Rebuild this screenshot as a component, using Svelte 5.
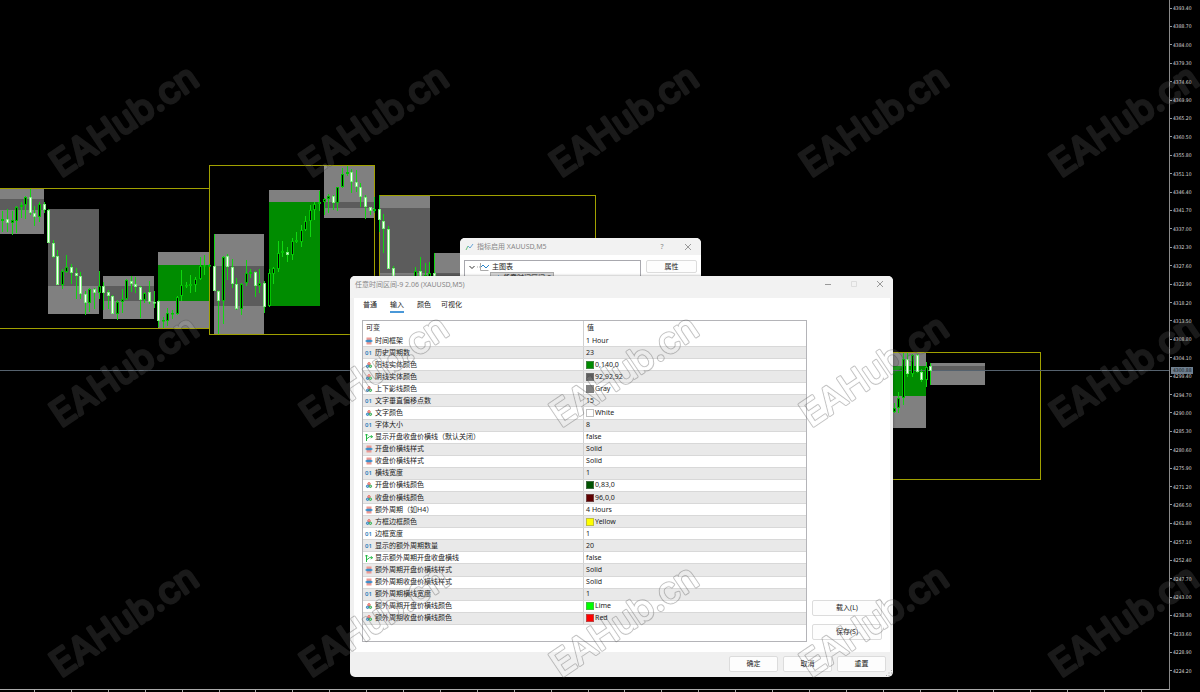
<script>
	const prices = Array.from({ length: 37 }, (_, i) => (4393.4 - i * 4.7).toFixed(2));
	const ticks = Array.from({ length: 60 }, (_, i) => Math.round(34 + i * 36.9));

	// period boxes: x, y, width, height, body y, body height, body colour
	const periods = [
		[0, 189, 44, 45, 199, 11, "#5c5c5c"],
		[48, 209, 51, 105, 209, 77, "#5c5c5c"],
		[103, 276, 51, 43, 286, 15, "#5c5c5c"],
		[158, 252, 51, 76, 265, 36, "#008c00"],
		[214, 234, 50, 100, 266, 40, "#5c5c5c"],
		[269, 190, 51, 116, 202, 104, "#008c00"],
		[324, 165, 51, 53, 202, 6, "#5c5c5c"],
		[379, 195, 51, 120, 208, 65, "#5c5c5c"],
		[434, 253, 51, 60, 273, 40, "#5c5c5c"],
		[875, 352, 51, 76, 366, 30, "#008c00"],
		[930, 363, 55, 22, 366, 4, "#5c5c5c"],
	];

	// four-hour frames: x, y, width, height
	const frames = [
		[-10, 188, 219, 140],
		[209, 165, 165, 169],
		[379, 195, 216, 120],
		[820, 352, 220, 127],
	];

	// centre, high, low, body top, body bottom, falling
	const candles = [
		[2, 211, 232, 219, 221, 0],
		[7, 209, 232, 219, 223, 1],
		[12, 211, 235, 220, 223, 0],
		[16, 206, 233, 207, 221, 0],
		[21, 202, 218, 205, 207, 0],
		[25, 196, 219, 197, 205, 0],
		[30, 189, 215, 197, 213, 1],
		[34, 206, 226, 213, 217, 1],
		[39, 202, 222, 204, 217, 0],
		[44, 202, 213, 204, 210, 1],
		[48, 209, 243, 210, 243, 1],
		[53, 240, 258, 243, 257, 1],
		[57, 250, 285, 256, 285, 1],
		[62, 269, 289, 271, 285, 0],
		[66, 255, 273, 267, 272, 0],
		[71, 264, 284, 267, 273, 1],
		[76, 268, 299, 273, 276, 1],
		[80, 272, 299, 276, 294, 1],
		[85, 291, 315, 294, 303, 1],
		[89, 288, 312, 289, 303, 0],
		[94, 288, 309, 289, 293, 1],
		[99, 271, 299, 286, 293, 0],
		[103, 282, 310, 286, 293, 1],
		[108, 290, 309, 292, 296, 1],
		[112, 295, 314, 296, 314, 1],
		[117, 300, 320, 302, 314, 0],
		[122, 289, 313, 299, 302, 0],
		[126, 279, 300, 280, 299, 0],
		[131, 276, 292, 281, 284, 1],
		[135, 277, 293, 284, 287, 1],
		[140, 286, 318, 287, 300, 1],
		[144, 292, 303, 293, 300, 0],
		[149, 281, 304, 292, 302, 1],
		[154, 291, 308, 302, 303, 1],
		[158, 300, 327, 301, 321, 1],
		[163, 317, 328, 320, 321, 0],
		[167, 308, 326, 313, 321, 0],
		[172, 310, 319, 313, 314, 0],
		[177, 296, 315, 297, 314, 0],
		[181, 270, 301, 285, 296, 0],
		[186, 282, 288, 285, 286, 0],
		[190, 275, 293, 284, 286, 0],
		[195, 277, 292, 279, 285, 0],
		[200, 257, 280, 266, 279, 0],
		[204, 255, 275, 265, 266, 0],
		[209, 264, 267, 265, 266, 0],
		[214, 234, 291, 266, 291, 1],
		[218, 290, 334, 291, 301, 1],
		[223, 256, 324, 257, 301, 0],
		[227, 254, 280, 256, 267, 1],
		[232, 259, 288, 267, 284, 1],
		[236, 278, 310, 284, 309, 1],
		[241, 283, 315, 284, 309, 0],
		[246, 260, 286, 273, 283, 0],
		[250, 269, 278, 272, 274, 0],
		[255, 271, 297, 272, 286, 1],
		[259, 269, 293, 283, 286, 0],
		[264, 281, 313, 283, 307, 1],
		[269, 269, 307, 273, 306, 0],
		[273, 267, 284, 268, 274, 0],
		[278, 241, 272, 253, 269, 0],
		[282, 241, 257, 251, 253, 0],
		[287, 247, 262, 252, 255, 1],
		[292, 238, 260, 241, 255, 0],
		[296, 232, 243, 240, 242, 0],
		[301, 225, 247, 230, 242, 0],
		[305, 216, 231, 221, 230, 0],
		[310, 205, 237, 210, 221, 0],
		[314, 202, 220, 204, 210, 0],
		[319, 191, 211, 202, 204, 0],
		[324, 198, 215, 199, 202, 0],
		[328, 194, 213, 196, 199, 0],
		[333, 195, 210, 196, 203, 1],
		[337, 187, 211, 187, 203, 0],
		[342, 168, 188, 174, 187, 0],
		[347, 166, 176, 172, 174, 0],
		[351, 169, 193, 172, 182, 1],
		[356, 170, 192, 182, 187, 1],
		[360, 183, 207, 187, 197, 1],
		[365, 195, 219, 197, 207, 1],
		[370, 207, 215, 207, 211, 1],
		[374, 197, 213, 209, 211, 0],
		[379, 195, 232, 209, 220, 1],
		[383, 214, 253, 221, 229, 1],
		[388, 226, 269, 229, 269, 1],
		[393, 266, 300, 268, 290, 1],
		[415, 267, 300, 271, 290, 0],
		[420, 257, 300, 271, 290, 1],
		[425, 263, 300, 275, 290, 0],
		[429, 262, 300, 273, 290, 0],
		[434, 253, 300, 273, 290, 1],
		[894, 403, 413, 408, 412, 0],
		[898, 392, 413, 398, 408, 0],
		[903, 353, 405, 359, 398, 0],
		[907, 353, 377, 359, 374, 1],
		[912, 354, 377, 355, 374, 0],
		[917, 354, 373, 355, 372, 1],
		[921, 369, 382, 372, 380, 1],
		[926, 362, 387, 367, 380, 0],
		[930, 363, 385, 366, 371, 1],
	];

	const tabs = ["普通", "输入", "颜色", "可视化"];
	let activeTab = $state("输入");

	const inputs = [
		{ type: "enum", name: "时间框架", value: "1 Hour" },
		{ type: "int", name: "历史周期数", value: "23" },
		{ type: "color", name: "阳线实体颜色", value: "0,140,0", color: "#008c00" },
		{ type: "color", name: "阴线实体颜色", value: "92,92,92", color: "#5c5c5c" },
		{ type: "color", name: "上下影线颜色", value: "Gray", color: "#808080" },
		{ type: "int", name: "文字垂直偏移点数", value: "15" },
		{ type: "color", name: "文字颜色", value: "White", color: "#ffffff" },
		{ type: "int", name: "字体大小", value: "8" },
		{ type: "bool", name: "显示开盘收盘价横线（默认关闭）", value: "false" },
		{ type: "enum", name: "开盘价横线样式", value: "Solid" },
		{ type: "enum", name: "收盘价横线样式", value: "Solid" },
		{ type: "int", name: "横线宽度", value: "1" },
		{ type: "color", name: "开盘价横线颜色", value: "0,83,0", color: "#005300" },
		{ type: "color", name: "收盘价横线颜色", value: "96,0,0", color: "#600000" },
		{ type: "enum", name: "额外周期（如H4）", value: "4 Hours" },
		{ type: "color", name: "方框边框颜色", value: "Yellow", color: "#ffff00" },
		{ type: "int", name: "边框宽度", value: "1" },
		{ type: "int", name: "显示的额外周期数量", value: "20" },
		{ type: "bool", name: "显示额外周期开盘收盘横线", value: "false" },
		{ type: "enum", name: "额外周期开盘价横线样式", value: "Solid" },
		{ type: "enum", name: "额外周期收盘价横线样式", value: "Solid" },
		{ type: "int", name: "额外周期横线宽度", value: "1" },
		{ type: "color", name: "额外周期开盘价横线颜色", value: "Lime", color: "#00ff00" },
		{ type: "color", name: "额外周期收盘价横线颜色", value: "Red", color: "#ff0000" },
	];

	const marks = [0, 1, 2].flatMap((row) => [0, 1, 2, 3, 4].map((col) => [61 + col * 250, 178 + row * 250]));
</script>

<main class="terminal">
	<div class="chart">
		<svg class="plot" aria-label="XAUUSD,M5">
			{#each periods as [x, y, w, h, by, bh, color]}
				<rect {x} {y} width={w} height={h} fill="#808080" />
				<rect {x} y={by} width={w} height={bh} fill={color} />
			{/each}
			{#each frames as [x, y, w, h]}
				<rect x={x + 0.5} y={y + 0.5} width={w} height={h} fill="none" stroke="#a0a000" />
			{/each}
			<rect x="0" y="370" width="100%" height="1" fill="#55626e" />
			{#each candles as [x, high, low, top, bottom, falling]}
				<rect {x} y={high} width="1" height={low - high} fill="#10d810" />
				<rect
					x={x - 0.5}
					y={top + 0.5}
					width="2"
					height={Math.max(bottom - top - 1, 0.5)}
					fill={falling ? "#fff" : "#000"}
					stroke={falling ? "#7cf07c" : "#00c400"}
				/>
			{/each}
		</svg>
		<div class="price-axis">
			{#each prices as price}
				<span class="price">{price}</span>
			{/each}
			<span class="current">4300.88</span>
		</div>
		<svg class="time-axis" aria-hidden="true">
			{#each ticks as x}
				<rect {x} y="0" width="1" height="2" fill="#aaa" />
			{/each}
		</svg>
	</div>

	<section class="window list-window">
		<header class="title-bar">
			<svg class="app-icon" viewBox="0 0 9 8">
				<path d="M1 7 L3 3 L5 5" fill="none" stroke="#6abf7a" />
				<path d="M3 3 L5 5 L8 1" fill="none" stroke="#68a5d8" />
			</svg>
			<span class="title">指标启用 XAUUSD,M5</span>
			<button class="caption-button" aria-label="帮助">?</button>
			<button class="caption-button" aria-label="关闭">
				<svg viewBox="0 0 8 8"><path d="M1 1 L7 7 M7 1 L1 7" /></svg>
			</button>
		</header>
		<div class="list-body">
			<div class="tree">
				<div class="tree-row">
					<svg class="chevron" viewBox="0 0 6 6"><path d="M0.5 2 L3 4.5 L5.5 2" /></svg>
					<svg class="tree-icon" viewBox="0 0 12 8">
						<path d="M0 4h3" stroke="#aaa" stroke-dasharray="1 1" />
						<path d="M3.5 0v7.5h8" stroke="#aaa" />
						<path d="M4 4 L6 2 L9 5 L12 2" stroke="#2a84c8" />
					</svg>
					<span>主图表</span>
				</div>
				<div class="tree-child">
					<svg class="app-icon" viewBox="0 0 9 8">
						<path d="M1 6 L3 2 L5 4 L8 1" fill="none" stroke="#68a5d8" />
					</svg>
					<span>任意时间区间-9</span>
				</div>
			</div>
			<button class="button">属性</button>
		</div>
	</section>

	<section class="window settings">
		<header class="title-bar">
			<span class="title">任意时间区间-9 2.06 (XAUUSD,M5)</span>
			<button class="caption-button" aria-label="最小化">
				<svg viewBox="0 0 8 8"><path d="M1 4.5 H7" /></svg>
			</button>
			<button class="caption-button faded" aria-label="最大化" disabled>
				<svg viewBox="0 0 8 8"><path d="M1.5 1.5 H6.5 V6.5 H1.5 Z" /></svg>
			</button>
			<button class="caption-button" aria-label="关闭">
				<svg viewBox="0 0 8 8"><path d="M1 1 L7 7 M7 1 L1 7" /></svg>
			</button>
		</header>
		<div class="settings-body">
			<nav class="tabs">
				{#each tabs as tab}
					<button class="tab" class:active={tab === activeTab} onclick={() => (activeTab = tab)}>{tab}</button>
				{/each}
			</nav>
			<div class="panel">
				<div class="grid-box">
					<table>
						<thead>
							<tr><th>可变</th><th>值</th></tr>
						</thead>
						<tbody>
							{#each inputs as input}
								<tr>
									<td>
										<div class="cell">
											{#if input.type === "int"}
												<span class="int">01</span>
											{:else if input.type === "enum"}
												<svg class="icon" viewBox="0 0 8 8">
													<rect x="1.5" y="0.5" width="5" height="2.5" fill="#ee9a94" />
													<rect x="1.5" y="5" width="5" height="2.5" fill="#ee9a94" />
													<path d="M2 2.7h4l2 1.3-2 1.3H2L0 4z" fill="#3e8fc8" />
												</svg>
											{:else if input.type === "color"}
												<svg class="icon" viewBox="0 0 8 8">
													<circle cx="4" cy="2.8" r="1.2" fill="#f6c4c0" stroke="#e2574c" stroke-width="0.9" />
													<circle cx="2.6" cy="5.3" r="1.2" fill="#8fc0e8" stroke="#2a7ab8" stroke-width="0.9" />
													<circle cx="5.4" cy="5.3" r="1.2" fill="#a8dfb4" stroke="#26a544" stroke-width="0.9" />
												</svg>
											{:else}
												<svg class="icon" viewBox="0 0 8 8">
													<path d="M1.5 8V1M0 2.5L1.5 1L3 2.5M1.5 6L4.5 3.7H7.5M6 2.2L7.5 3.7L6 5.2" fill="none" stroke="#25b845" />
												</svg>
											{/if}
											<span>{input.name}</span>
										</div>
									</td>
									<td>
										<div class="cell value">
											{#if input.color}
												<span class="swatch" style="background: {input.color}"></span>
											{/if}
											<span>{input.value}</span>
										</div>
									</td>
								</tr>
							{/each}
						</tbody>
					</table>
				</div>
				<div class="side">
					<button class="button">载入(L)</button>
					<button class="button">保存(S)</button>
				</div>
			</div>
		</div>
		<footer class="actions">
			<button class="button">确定</button>
			<button class="button">取消</button>
			<button class="button">重置</button>
		</footer>
		<svg class="grip" viewBox="0 0 8 8" aria-hidden="true">
			<path d="M6 1h1v1h-1zM6 3.5h1v1h-1zM3.5 3.5h1v1h-1zM6 6h1v1h-1zM3.5 6h1v1h-1zM1 6h1v1h-1z" />
		</svg>
	</section>

	<svg class="watermark" aria-hidden="true">
		<defs>
			<mask id="outline" maskUnits="userSpaceOnUse" x="-10" y="-50" width="200" height="80">
				<rect x="-10" y="-50" width="200" height="80" fill="#fff" />
				<text class="mark" fill="#000" stroke="#000" stroke-width="1">EAHub.cn</text>
			</mask>
		</defs>
		{#each marks as [x, y]}
			<g transform="translate({x} {y}) rotate(-34)">
				<g opacity="0.1">
					<text class="mark" fill="#fff" stroke="#fff" stroke-width="3">EAHub.cn</text>
				</g>
				<g opacity="0.26" mask="url(#outline)">
					<text class="mark" fill="#1a1a1a" stroke="#1a1a1a" stroke-width="3">EAHub.cn</text>
				</g>
			</g>
		{/each}
	</svg>
</main>

<style>
	:global(body) {
		margin: 0;
		background: #000;
	}
	.terminal {
		position: relative;
		min-height: 100vh;
		display: flex;
		overflow: hidden;
		font: 7px/10px "Noto Sans", "Noto Sans CJK SC", sans-serif;
		color: #222;
	}
	.chart {
		flex: 1;
		display: grid;
		grid-template-columns: 1fr 30px;
		grid-template-rows: 1fr 2px;
	}
	.plot {
		width: 100%;
		height: 100%;
		border-right: 1px solid #8a8a8a;
		border-bottom: 1px solid #aaa;
		box-sizing: border-box;
	}
	.price-axis {
		position: relative;
		grid-row: span 2;
		display: flex;
		flex-direction: column;
		justify-content: space-between;
		padding: 3px 0 16px;
		color: #d8d8d8;
		font: 5px/10px "DejaVu Sans Condensed", "DejaVu Sans", sans-serif;
	}
	.price {
		display: flex;
		align-items: center;
		gap: 1px;
	}
	.price::before {
		content: "";
		width: 2px;
		height: 1px;
		background: #999;
	}
	.current {
		position: absolute;
		top: 367px;
		left: 1px;
		width: 22px;
		padding-left: 2px;
		box-sizing: border-box;
		line-height: 7px;
		background: #708090;
		color: #101820;
	}
	.time-axis {
		width: 100%;
		height: 2px;
	}
	button {
		font: inherit;
		color: inherit;
		padding: 0;
		border: 0;
		background: none;
	}
	.window {
		position: absolute;
		display: flex;
		flex-direction: column;
		border-radius: 5px;
		background: #f0f0f0;
		overflow: hidden;
	}
	.title-bar {
		display: flex;
		align-items: center;
		height: 17px;
		padding: 0 5px;
		background: #f2f2f2;
		color: #888;
	}
	.title {
		flex: 1;
	}
	.app-icon {
		width: 9px;
		height: 8px;
		margin-right: 3px;
	}
	.caption-button {
		width: 26px;
		height: 16px;
		display: flex;
		align-items: center;
		justify-content: center;
	}
	.caption-button svg {
		width: 8px;
		height: 8px;
		fill: none;
		stroke: #999;
	}
	.caption-button.faded svg {
		stroke: #ddd;
	}
	.button {
		height: 16px;
		width: 49px;
		background: #fdfdfd;
		border: 1px solid #dcdcdc;
		border-radius: 2px;
		line-height: 12px;
	}
	.list-window {
		left: 460px;
		top: 238px;
		width: 241px;
		height: 100px;
	}
	.list-window .title-bar {
		padding-right: 0;
	}
	.list-body {
		flex: 1;
		display: flex;
		gap: 5px;
		padding: 5px 4px;
		background: #fff;
	}
	.list-body .button {
		width: 51px;
		height: 13px;
		line-height: 10px;
	}
	.tree {
		flex: 1;
		border: 1px solid #a8a8ae;
	}
	.tree-row {
		display: flex;
		align-items: center;
		height: 11px;
		padding-left: 4px;
	}
	.chevron {
		width: 6px;
		height: 6px;
		margin-right: 2px;
		fill: none;
		stroke: #333;
	}
	.tree-icon {
		width: 12px;
		height: 8px;
		margin-right: 3px;
		fill: none;
	}
	.tree-child {
		display: flex;
		align-items: center;
		width: 62px;
		margin-left: 25px;
		background: #d4d4d4;
		border: 1px solid #aaa;
	}
	.settings {
		left: 350px;
		top: 276px;
		width: 543px;
		box-shadow: 0 0 3px rgba(0, 0, 0, 0.4);
	}
	.settings .title-bar {
		height: 22px;
		align-items: flex-start;
		padding-right: 0;
	}
	.settings .title {
		line-height: 18px;
	}
	.settings-body {
		margin: 0 3px 0 4px;
		padding: 0 5px 10px 8px;
		background: #fff;
	}
	.tabs {
		display: flex;
		gap: 13px;
		height: 22px;
		padding-left: 1px;
	}
	.tab {
		height: 15px;
		line-height: 13px;
		border-bottom: 2px solid transparent;
	}
	.tab.active {
		border-bottom-color: #4a98d8;
	}
	.tab:nth-child(4) {
		margin-left: -3px;
	}
	.panel {
		display: flex;
		gap: 5px;
	}
	.grid-box {
		flex: 1;
		height: 320px;
		border: 1px solid #b4b4b8;
	}
	table {
		width: 100%;
		height: 304px;
		border-collapse: collapse;
		table-layout: fixed;
	}
	th,
	td {
		padding: 0 0 0 3px;
		text-align: left;
		font-weight: normal;
		border-bottom: 1px solid #d8d8d8;
	}
	th {
		height: 14px;
		border-bottom: 0;
	}
	th:first-child,
	td:first-child {
		border-right: 1px solid #d0d0d0;
	}
	th:first-child {
		width: 49%;
	}
	td {
		height: 11px;
	}
	td:first-child,
	td:last-child {
		padding-left: 2px;
	}
	tbody tr:nth-child(even) {
		background: #e9e9e9;
	}
	.cell {
		display: flex;
		align-items: center;
		gap: 2px;
		height: 11px;
		white-space: nowrap;
	}
	.value {
		gap: 1px;
	}
	.icon,
	.int {
		width: 8px;
		height: 8px;
	}
	.int {
		font-size: 6px;
		font-weight: 600;
		line-height: 8px;
		color: #2a7ab8;
	}
	.swatch {
		width: 8px;
		height: 8px;
		box-sizing: border-box;
		border: 1px solid rgba(128, 128, 128, 0.5);
	}
	.side {
		width: 73px;
		display: flex;
		flex-direction: column;
		justify-content: flex-end;
		gap: 8px;
		padding-bottom: 2px;
	}
	.side .button {
		width: 70px;
	}
	.actions {
		display: flex;
		justify-content: flex-end;
		gap: 5px;
		padding: 4px 7px 5px;
	}
	.grip {
		position: absolute;
		right: 0;
		bottom: 0;
		width: 8px;
		height: 8px;
		fill: #aaa;
	}
	.watermark {
		position: absolute;
		inset: 0;
		width: 100%;
		height: 100%;
		pointer-events: none;
	}
	.mark {
		font: 36px "Inter", sans-serif;
		stroke-linejoin: round;
	}
</style>
